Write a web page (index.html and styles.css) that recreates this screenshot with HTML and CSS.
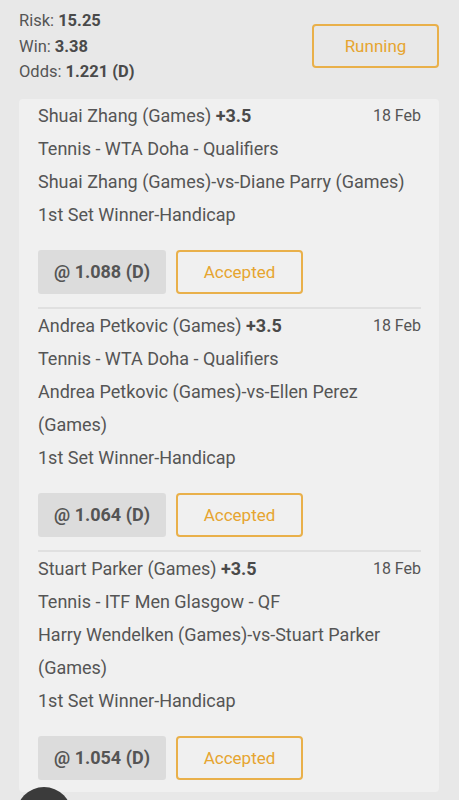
FILE: index.html
```html
<!DOCTYPE html>
<html>
<head>
<meta charset="utf-8">
<link rel="stylesheet" href="styles.css">
</head>
<body>
<div class="page">
  <div class="summary">
    <div class="totals">
      <div class="line">Risk: <b>15.25</b></div>
      <div class="line">Win: <b>3.38</b></div>
      <div class="line">Odds: <b>1.221 (D)</b></div>
    </div>
    <div class="status">Running</div>
  </div>
  <div class="card">
    <div class="item">
      <div class="row head"><span>Shuai Zhang (Games) <b>+3.5</b></span><span class="date">18 Feb</span></div>
      <div class="row">Tennis - WTA Doha - Qualifiers</div>
      <div class="row">Shuai Zhang (Games)-vs-Diane Parry (Games)</div>
      <div class="row">1st Set Winner-Handicap</div>
      <div class="actions"><div class="odds">@ 1.088 (D)</div><div class="accepted">Accepted</div></div>
    </div>
    <div class="item">
      <div class="row head"><span>Andrea Petkovic (Games) <b>+3.5</b></span><span class="date">18 Feb</span></div>
      <div class="row">Tennis - WTA Doha - Qualifiers</div>
      <div class="row">Andrea Petkovic (Games)-vs-Ellen Perez (Games)</div>
      <div class="row">1st Set Winner-Handicap</div>
      <div class="actions"><div class="odds">@ 1.064 (D)</div><div class="accepted">Accepted</div></div>
    </div>
    <div class="item">
      <div class="row head"><span>Stuart Parker (Games) <b>+3.5</b></span><span class="date">18 Feb</span></div>
      <div class="row">Tennis - ITF Men Glasgow - QF</div>
      <div class="row">Harry Wendelken (Games)-vs-Stuart Parker (Games)</div>
      <div class="row">1st Set Winner-Handicap</div>
      <div class="actions"><div class="odds">@ 1.054 (D)</div><div class="accepted">Accepted</div></div>
    </div>
  </div>
</div>
<div class="fab"></div>
</body>
</html>
```
FILE: styles.css
```css
html, body {
  margin: 0;
  padding: 0;
  background: #e8e8e8;
  font-family: Roboto, "Liberation Sans", sans-serif;
  color: #555;
}
.page {
  padding: 8px 20px 0 19px;
}
.summary {
  display: flex;
  justify-content: space-between;
  align-items: flex-start;
}
.totals .line {
  font-size: 16.5px;
  line-height: 25.5px;
}
.totals b {
  color: #4a4a4a;
}
.status {
  margin-top: 16px;
  width: 123px;
  height: 40px;
  border: 2px solid #e9b04a;
  border-radius: 4px;
  color: #e6a530;
  font-size: 17px;
  display: flex;
  align-items: center;
  justify-content: center;
}
.card {
  margin-top: 14px;
  background: #f0f0f0;
  border-radius: 4px;
  padding: 0 18px 12px 19px;
}
.item {
  border-bottom: 2px solid #e0e0e0;
  padding-bottom: 13px;
}
.item:last-child {
  border-bottom: none;
  padding-bottom: 0;
}
.row {
  font-size: 18px;
  line-height: 33px;
}
.head {
  display: flex;
  justify-content: space-between;
}
.head b {
  color: #4a4a4a;
}
.date {
  font-size: 16px;
}
.actions {
  display: flex;
  gap: 10px;
  margin-top: 19px;
}
.odds {
  width: 128px;
  height: 44px;
  background: #dcdcdc;
  border-radius: 3px;
  font-weight: bold;
  font-size: 18px;
  color: #555;
  display: flex;
  align-items: center;
  justify-content: center;
}
.accepted {
  width: 123px;
  height: 40px;
  border: 2px solid #e9b04a;
  border-radius: 4px;
  color: #e6a530;
  font-size: 17px;
  display: flex;
  align-items: center;
  justify-content: center;
}
.fab {
  position: fixed;
  left: 16px;
  top: 787px;
  width: 56px;
  height: 56px;
  border-radius: 50%;
  background: #3b3b3b;
}
```
